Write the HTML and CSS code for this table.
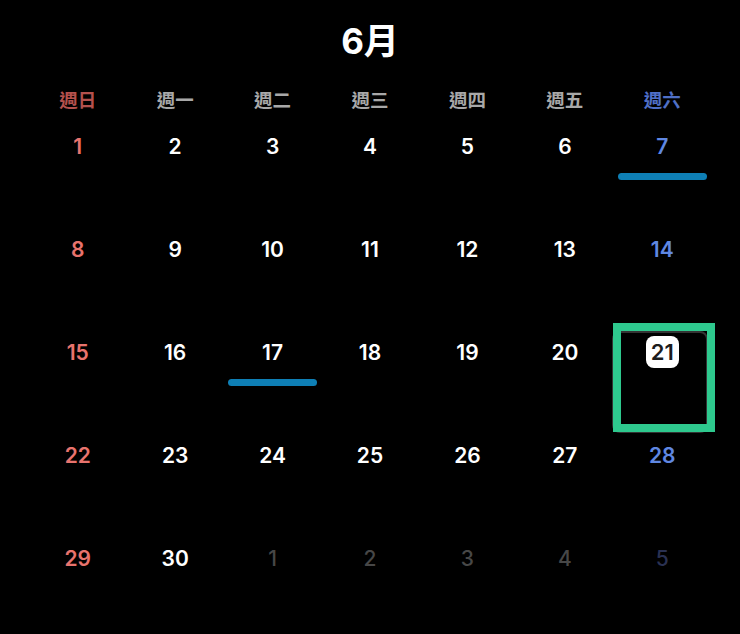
FILE: index.html
```html
<!DOCTYPE html>
<html lang="zh-Hant">
<head>
<meta charset="utf-8">
<link rel="stylesheet" href="styles.css">
</head>
<body>
<div class="cal">
  <h1 class="title">6月</h1>
  <div class="grid">
    <div class="hd sun">週日</div>
    <div class="hd">週一</div>
    <div class="hd">週二</div>
    <div class="hd">週三</div>
    <div class="hd">週四</div>
    <div class="hd">週五</div>
    <div class="hd sat">週六</div>

    <div class="day"><span class="num sun">1</span></div>
    <div class="day"><span class="num">2</span></div>
    <div class="day"><span class="num">3</span></div>
    <div class="day"><span class="num">4</span></div>
    <div class="day"><span class="num">5</span></div>
    <div class="day"><span class="num">6</span></div>
    <div class="day"><span class="num sat">7</span><span class="bar"></span></div>

    <div class="day"><span class="num sun">8</span></div>
    <div class="day"><span class="num">9</span></div>
    <div class="day"><span class="num">10</span></div>
    <div class="day"><span class="num">11</span></div>
    <div class="day"><span class="num">12</span></div>
    <div class="day"><span class="num">13</span></div>
    <div class="day"><span class="num sat">14</span></div>

    <div class="day"><span class="num sun">15</span></div>
    <div class="day"><span class="num">16</span></div>
    <div class="day"><span class="num">17</span><span class="bar"></span></div>
    <div class="day"><span class="num">18</span></div>
    <div class="day"><span class="num">19</span></div>
    <div class="day"><span class="num">20</span></div>
    <div class="day selected"><span class="sel-bg"></span><span class="num today">21</span><span class="focus"></span></div>

    <div class="day"><span class="num sun">22</span></div>
    <div class="day"><span class="num">23</span></div>
    <div class="day"><span class="num">24</span></div>
    <div class="day"><span class="num">25</span></div>
    <div class="day"><span class="num">26</span></div>
    <div class="day"><span class="num">27</span></div>
    <div class="day"><span class="num sat">28</span></div>

    <div class="day"><span class="num sun">29</span></div>
    <div class="day"><span class="num">30</span></div>
    <div class="day"><span class="num other">1</span></div>
    <div class="day"><span class="num other">2</span></div>
    <div class="day"><span class="num other">3</span></div>
    <div class="day"><span class="num other">4</span></div>
    <div class="day"><span class="num other sat-other">5</span></div>
  </div>
</div>
</body>
</html>
```

FILE: styles.css
```css
html, body {
  margin: 0;
  padding: 0;
  background: #000;
  width: 740px;
  height: 634px;
  overflow: hidden;
}

.cal {
  padding: 0 29px;
  font-family: Inter, "Noto Sans CJK TC", sans-serif;
  color: #fff;
}

.title {
  margin: 0;
  height: 84px;
  line-height: 82px;
  text-align: center;
  font-size: 35px;
  font-weight: 700;
  font-family: Inter, "Noto Sans CJK TC", sans-serif;
}

.grid {
  display: grid;
  grid-template-columns: repeat(7, 1fr);
  grid-template-rows: 34px repeat(5, 103px);
}

.hd {
  display: flex;
  align-items: center;
  justify-content: center;
  padding-bottom: 4px;
  font-family: "Noto Sans CJK TC", sans-serif;
  font-size: 18.5px;
  font-weight: 700;
  color: #a8a8a8;
}

.hd.sun { color: #b4514d; }
.hd.sat { color: #4f6fc6; }

.day {
  position: relative;
  display: flex;
  flex-direction: column;
  align-items: center;
  padding-top: 15px;
}

.num {
  display: flex;
  align-items: center;
  justify-content: center;
  height: 26px;
  font-size: 21px;
  font-weight: 600;
  color: #fff;
  position: relative;
  z-index: 2;
}

.num.sun { color: #e8736d; }
.num.sat { color: #5f87e2; }
.num.other { color: #474747; font-weight: 500; }
.num.sat-other { color: #2a3152; }

.bar {
  margin-top: 14px;
  width: 89px;
  height: 7px;
  border-radius: 4px;
  background: #0e7fb5;
}

.num.today {
  width: 33px;
  height: 32px;
  margin-top: -3px;
  background: #fff;
  color: #1c1c1c;
  border-radius: 8px;
  font-size: 22px;
  font-weight: 600;
}

.sel-bg {
  position: absolute;
  left: -2px;
  top: 7px;
  width: 96px;
  height: 102px;
  border: 2px solid #343434;
  border-radius: 8px;
  box-sizing: border-box;
}

.focus {
  position: absolute;
  left: -1px;
  top: -1px;
  width: 102px;
  height: 109px;
  border: 8px solid #2ec98e;
  box-sizing: border-box;
  z-index: 3;
}
```
